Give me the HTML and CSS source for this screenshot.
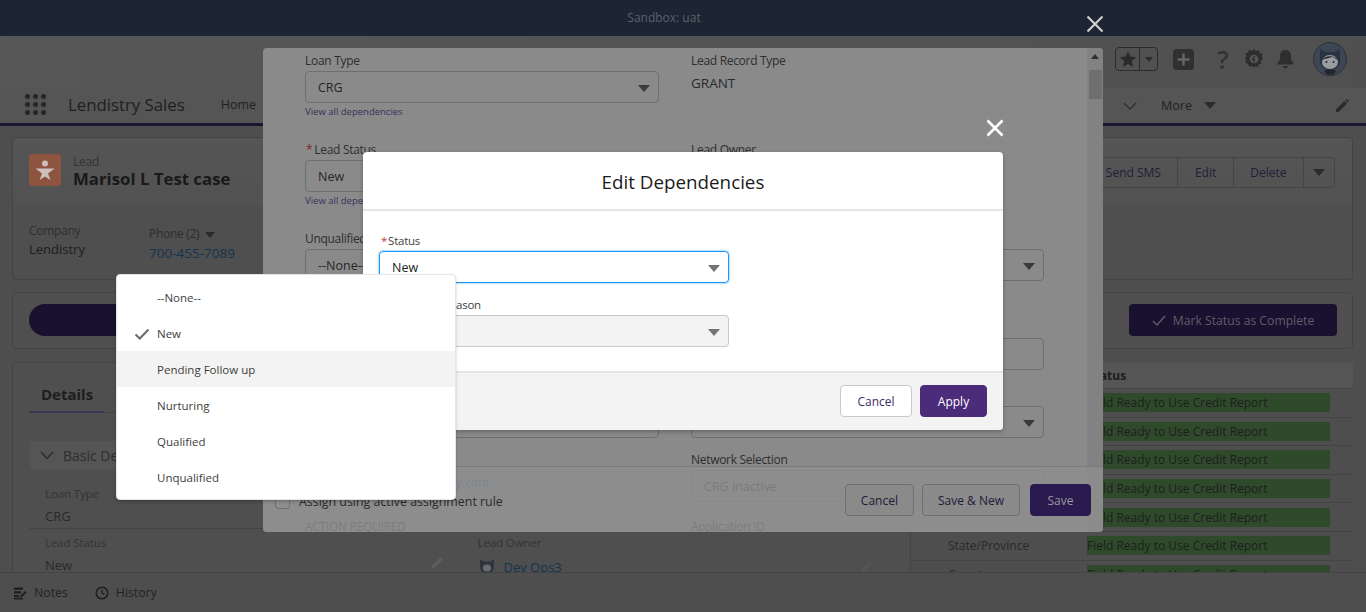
FILE: index.html
```html
<!DOCTYPE html>
<html lang="en">
<head>
    <meta charset="UTF-8">
    <meta name="viewport" content="width=device-width, initial-scale=1.0">
    <title>Lendistry Sales - Edit Dependencies</title>
    <link rel="stylesheet" href="styles.css">
</head>
<body>
    <div class="sandbox-bar">Sandbox: uat</div>

    <header class="global-header">
        <div class="header-tools">
            <div class="fav-group">
                <span class="fav-star">
                    <svg width="18" height="18" viewBox="0 0 24 24"><path d="M12 1.500l3.200 7.200 7.800.8-5.900 5.200 1.800 7.800-6.900-4-6.900 4 1.800-7.800L1 9.500l7.800-.8z" fill="#2b2b2b"/></svg>
                </span>
                <span class="fav-caret"><i class="caret caret-small"></i></span>
            </div>
            <svg class="tool-plus" width="21" height="21" viewBox="0 0 21 21"><rect width="21" height="21" rx="4" fill="#303030"/><path d="M10.500 4.500v12M4.500 10.500h12" stroke="#666" stroke-width="2.400"/></svg>
            <span class="tool-help">?</span>
            <svg class="tool-gear" width="18" height="20" viewBox="0 0 18 20"><path d="M9 0.500l2 2.200 2.900-.7.900 2.900 2.800 1-.7 2.900L18 11l-2.100 2.100.7 2.800-2.800.9-.9 2.800-2.900-.6L9 20.200 7 18.500l-2.900.6-.9-2.800-2.800-.9.700-2.800L0 11l1.100-2.700-.7-2.900 2.800-1 .9-2.900L7 2.700z" fill="#2e2e2e" transform="translate(0 -.6) scale(1 .95)"/><circle cx="9" cy="10" r="4.300" fill="#555"/><path d="M10 7l-2.500 3.500h2L8.500 13" stroke="#2e2e2e" stroke-width="1.200" fill="none"/></svg>
            <svg class="tool-bell" width="19" height="20" viewBox="0 0 19 20"><path d="M9.500 1c3.500 0 5.500 2.500 5.500 6v3.500l2.500 3.500v1.500h-16V14L4 10.500V7c0-3.500 2-6 5.500-6z" fill="#2e2e2e"/><path d="M7 17h5c0 1.500-1 2.500-2.500 2.500S7 18.500 7 17z" fill="#2e2e2e"/></svg>
            <svg class="tool-avatar" width="34" height="34" viewBox="0 0 34 34">
                <circle cx="17" cy="17" r="16.500" fill="#3d4654" stroke="#2d3138"/>
                <path d="M7 15l0-8 5 3h10l5-3v8c1 8-3 13-10 13S6 23 7 15z" fill="#2a3340"/>
                <ellipse cx="17" cy="20" rx="8" ry="7" fill="#9a9ea2"/>
                <path d="M9 18c3-5 13-5 16 0-4-2-4-3-6-3-2 1-6 1-10 3z" fill="#20252c"/>
                <circle cx="13.500" cy="20" r="1" fill="#20252c"/>
                <circle cx="20.500" cy="20" r="1" fill="#20252c"/>
                <path d="M11 29c3-2 9-2 12 0l-3 3.500h-6z" fill="#20252c"/>
            </svg>
        </div>
    </header>

    <nav class="app-nav">
        <span class="waffle"><i></i><i></i><i></i><i></i><i></i><i></i><i></i><i></i><i></i></span>
        <span class="app-name">Lendistry Sales</span>
        <a class="nav-home" href="#">Home</a>
        <span class="nav-right">
            <svg class="nav-chevron" width="14" height="8" viewBox="0 0 14 8"><path d="M1 1l6 6 6-6" stroke="#2b2b2b" stroke-width="1.200" fill="none"/></svg>
            <span class="nav-more">More</span>
            <i class="caret caret-nav"></i>
            <svg class="nav-pencil" width="14" height="14" viewBox="0 0 14 14"><path d="M1 10.500L9.500 2l2.500 2.500L3.500 13H1zM10.500 1l.8-.6c.4-.3.8-.3 1.100 0l1.200 1.200c.3.300.3.700 0 1l-.6.8z" fill="#2a2a2a"/></svg>
        </span>
    </nav>

    <main class="page">
        <section class="card highlights">
            <div class="hl-top">
                <span class="lead-icon">
                    <svg width="32" height="32" viewBox="0 0 32 32"><circle cx="16" cy="9.500" r="3" fill="#ccc0ba"/><path d="M6.500 14.500h19l-6.500 5 2.500 6.500-5.500-3.500-5.500 3.500 2.500-6.500z" fill="#ccc0ba"/></svg>
                </span>
                <div class="hl-titles">
                    <div class="hl-type">Lead</div>
                    <div class="hl-name">Marisol L Test case</div>
                </div>
                <div class="hl-actions">
                    <a class="act" href="#">Send SMS</a>
                    <a class="act" href="#">Edit</a>
                    <a class="act" href="#">Delete</a>
                    <a class="act act-more" href="#"><i class="caret"></i></a>
                </div>
            </div>
            <div class="hl-fields">
                <div class="hl-field hl-company">
                    <div class="hl-label">Company</div>
                    <div class="hl-value">Lendistry</div>
                </div>
                <div class="hl-field hl-phone">
                    <div class="hl-label">Phone (2) <i class="caret caret-phone"></i></div>
                    <a class="hl-link" href="#">700-455-7089</a>
                </div>
            </div>
        </section>

        <section class="card path">
            <span class="path-pill"></span>
            <button class="mark-btn">
                <svg width="14" height="11" viewBox="0 0 14 11"><path d="M1 6l4 4 8-9" stroke="#5e5e6a" stroke-width="1.400" fill="none"/></svg>
                Mark Status as Complete
            </button>
        </section>

        <div class="lower">
            <section class="card details">
                <div class="tabs"><span class="tab">Details</span></div>
                <div class="section-head">
                    <svg width="14" height="9" viewBox="0 0 14 9"><path d="M1 1l6 6.500L13 1" stroke="#2e2e2e" stroke-width="1.500" fill="none"/></svg>
                    Basic Details
                </div>
                <div class="detail-row detail-row-first">
                    <div class="detail-item detail-wide">
                        <div class="detail-label">Loan Type</div>
                        <div class="detail-value">CRG</div>
                    </div>
                </div>
                <div class="detail-row">
                    <div class="detail-item">
                        <div class="detail-label">Lead Status</div>
                        <div class="detail-value">New</div>
                        <svg class="detail-pencil" width="14" height="14" viewBox="0 0 14 14"><path d="M1 10.500L9.500 2l2.500 2.500L3.500 13H1z" fill="#5c5c5c"/></svg>
                    </div>
                    <div class="detail-item">
                        <div class="detail-label">Lead Owner</div>
                        <div class="detail-value detail-owner">
                            <svg width="18" height="18" viewBox="0 0 18 18"><path d="M2 8V1l3.500 2.500h7L16 1v7c0 5-3 8-7 8s-7-3-7-8z" fill="#30353c"/><ellipse cx="9" cy="10" rx="4" ry="3.500" fill="#6a6e72"/></svg>
                            <a href="#">Dev Ops3</a>
                        </div>
                        <svg class="detail-pencil detail-pencil-owner" width="14" height="14" viewBox="0 0 14 14"><path d="M1 10.500L9.500 2l2.500 2.500L3.500 13H1z" fill="#555"/></svg>
                    </div>
                </div>
            </section>

            <section class="status-table">
                <div class="status-head"><span></span><span class="status-title">Status</span></div>
                <div class="status-row"><span></span><span class="status-cell">Field Ready to Use Credit Report</span></div>
                <div class="status-row"><span></span><span class="status-cell">Field Ready to Use Credit Report</span></div>
                <div class="status-row"><span></span><span class="status-cell">Field Ready to Use Credit Report</span></div>
                <div class="status-row"><span></span><span class="status-cell">Field Ready to Use Credit Report</span></div>
                <div class="status-row"><span></span><span class="status-cell">Field Ready to Use Credit Report</span></div>
                <div class="status-row"><span>State/Province</span><span class="status-cell">Field Ready to Use Credit Report</span></div>
                <div class="status-row"><span>Country</span><span class="status-cell">Field Ready to Use Credit Report</span></div>
            </section>
        </div>
    </main>

    <footer class="util-bar">
        <span class="util-item">
            <svg width="14" height="14" viewBox="0 0 14 14"><path d="M1 1.500h9v2.300H1zM1 5.300h7v2.300H1zM1 9h5v2.300H1zM1 12h9v1.500H1z" fill="#1e1e1e"/><path d="M7 10l5-5 1.500 1.500-5 5H7z" fill="#1e1e1e"/></svg>
            Notes
        </span>
        <span class="util-item">
            <svg width="14" height="14" viewBox="0 0 14 14"><circle cx="7" cy="7" r="5.800" stroke="#1e1e1e" stroke-width="1.500" fill="none"/><path d="M7 3.500V7l2.500 1.500" stroke="#1e1e1e" stroke-width="1.300" fill="none"/></svg>
            History
        </span>
    </footer>

    <!-- record edit modal, sits behind the dependency dialog -->
    <div class="edit-modal">
        <div class="edit-scroll">
            <div class="edit-grid">
                <div class="field f-loan">
                    <label>Loan Type</label>
                    <div class="select">CRG<i class="caret"></i></div>
                    <a class="dep-link" href="#">View all dependencies</a>
                </div>
                <div class="field f-loan">
                    <label>Lead Record Type</label>
                    <div class="static">GRANT</div>
                </div>
                <div class="field f-status">
                    <label><b>*</b>Lead Status</label>
                    <div class="select">New<i class="caret"></i></div>
                    <a class="dep-link" href="#">View all dependencies</a>
                </div>
                <div class="field f-status">
                    <label>Lead Owner</label>
                </div>
                <div class="field f-unq">
                    <label>Unqualified Reason</label>
                    <div class="select">--None--<i class="caret"></i></div>
                </div>
                <div class="field f-unq">
                    <label>&nbsp;</label>
                    <div class="select"><i class="caret"></i></div>
                </div>
                <div class="field f-input">
                    <label>&nbsp;</label>
                    <div class="select"></div>
                </div>
                <div class="field f-input">
                    <label>&nbsp;</label>
                    <div class="select"></div>
                </div>
                <div class="field f-last">
                    <label>&nbsp;</label>
                    <div class="select"><i class="caret"></i></div>
                </div>
                <div class="field f-last">
                    <label>&nbsp;</label>
                    <div class="select"><i class="caret"></i></div>
                </div>
                <div class="field f-net">
                    <div class="faded-mail">info@lendistry.com</div>
                </div>
                <div class="field f-net">
                    <label>Network Selection</label>
                    <div class="select">CRG Inactive</div>
                </div>
                <div class="field f-action">
                    <label>ACTION REQUIRED</label>
                </div>
                <div class="field f-action">
                    <label>Application ID</label>
                </div>
            </div>
            <div class="scrollbar">
                <i class="arrow-up"></i>
                <span class="thumb"></span>
                <i class="arrow-down"></i>
            </div>
        </div>
        <div class="edit-footer">
            <label class="assign"><span class="checkbox"></span>Assign using active assignment rule</label>
            <div class="edit-buttons">
                <button class="btn-m">Cancel</button>
                <button class="btn-m">Save &amp; New</button>
                <button class="btn-m btn-m-save">Save</button>
            </div>
        </div>
    </div>

    <svg class="close close-outer" width="18" height="18" viewBox="0 0 18 18"><path d="M1.500 1.500l15 15M16.500 1.500l-15 15" stroke="#cfcfcf" stroke-width="2.200"/></svg>
    <svg class="close close-inner" width="18" height="18" viewBox="0 0 18 18"><path d="M1.500 1.500l15 15M16.500 1.500l-15 15" stroke="#fff" stroke-width="2.600"/></svg>

    <div class="dep-dialog">
        <h2 class="dep-title">Edit Dependencies</h2>
        <div class="dep-body">
            <div class="dep-field">
                <label><b>*</b>Status</label>
                <div class="dep-select dep-focus">New<i class="caret"></i></div>
            </div>
            <div class="dep-field">
                <label>Unqualified Reason</label>
                <div class="dep-select dep-disabled"><i class="caret"></i></div>
            </div>
        </div>
        <div class="dep-footer">
            <button class="dep-btn">Cancel</button>
            <button class="dep-btn dep-apply">Apply</button>
        </div>
    </div>

    <ul class="dropdown">
        <li>--None--</li>
        <li class="selected">
            <svg width="16" height="12" viewBox="0 0 16 12"><path d="M1.500 6.500l4.300 4L14.500 1.500" stroke="#6b6b6b" stroke-width="2" fill="none"/></svg>
            New
        </li>
        <li class="hover">Pending Follow up</li>
        <li>Nurturing</li>
        <li>Qualified</li>
        <li>Unqualified</li>
    </ul>
</body>
</html>
```

FILE: styles.css
```css
* {
    box-sizing: border-box;
}
html, body {
    margin: 0;
    height: 612px;
    overflow: hidden;
}
body {
    position: relative;
    font-family: "Open Sans", "Liberation Sans", sans-serif;
    font-size: 12px;
    color: #2a2a2a;
    background-color: #4e4e4e;
}
a {
    text-decoration: none;
}
.caret {
    display: inline-block;
    width: 0;
    height: 0;
    border-left: 6px solid transparent;
    border-right: 6px solid transparent;
    border-top: 7px solid #2b2b2b;
}

/* top of the app */
.sandbox-bar {
    height: 36px;
    line-height: 36px;
    padding-right: 38px;
    text-align: center;
    font-size: 12px;
    color: #5c626b;
    background-color: #1b2533;
}
.global-header {
    height: 52px;
    display: flex;
    justify-content: flex-end;
    background: linear-gradient(90deg, #575757, #505050);
}
.header-tools {
    display: flex;
    align-items: center;
    height: 46px;
    padding-right: 19px;
}
.fav-group {
    display: flex;
    width: 43px;
    height: 24px;
    border: 1px solid #2b2b2b;
    border-radius: 4px;
    margin-right: 15px;
}
.fav-star {
    width: 24px;
    display: flex;
    align-items: center;
    justify-content: center;
    border-right: 1px solid #2b2b2b;
}
.fav-caret {
    flex: 1;
    display: flex;
    align-items: center;
    justify-content: center;
}
.caret-small {
    border-left-width: 4px;
    border-right-width: 4px;
    border-top-width: 5px;
}
.tool-help {
    width: 18px;
    margin: 0 13px 0 20px;
    font-size: 26px;
    font-weight: 600;
    line-height: 24px;
    text-align: center;
    color: #333;
}
.tool-bell {
    margin: 0 18px 0 13px;
}
.app-nav {
    position: relative;
    height: 38px;
    display: flex;
    align-items: center;
    padding: 0 0 2px 25px;
    background-color: #555;
    border-bottom: 3px solid #1d1530;
}
.waffle {
    display: grid;
    grid-template-columns: repeat(3, 5px);
    gap: 3px;
    margin-right: 22px;
}
.waffle i {
    width: 5px;
    height: 5px;
    border-radius: 50%;
    background-color: #262626;
}
.app-name {
    font-size: 16.800px;
    color: #1e1e1e;
    margin-right: 36px;
}
.nav-home {
    font-size: 12.500px;
    color: #1e1e1e;
}
.nav-right {
    position: absolute;
    right: 0;
    top: 0;
    height: 35px;
    display: flex;
    align-items: center;
}
.nav-chevron {
    margin-right: 24px;
}
.nav-more {
    font-size: 12.500px;
    color: #222;
    margin-right: 12px;
}
.caret-nav {
    margin-right: 119px;
}
.nav-pencil {
    margin-right: 17px;
}
.page {
    padding: 11px 13px 0 12px;
}
.card {
    border: 1px solid #444;
    border-radius: 4px;
    background-color: #4f4f4f;
}

/* record highlights */
.highlights {
    height: 143px;
    margin-bottom: 12px;
    background: linear-gradient(#555 0, #525252 65px, #4f4f4f 70px);
}
.hl-top {
    display: flex;
    align-items: flex-start;
    padding: 16px 17px 0 16px;
}
.lead-icon {
    width: 32px;
    height: 32px;
    border-radius: 3px;
    background-color: #8e5440;
    margin-right: 12px;
}
.hl-type {
    font-size: 12px;
    line-height: 15px;
    letter-spacing: -.2px;
    color: #333;
}
.hl-name {
    font-size: 16.800px;
    line-height: 20px;
    font-weight: 700;
    color: #191919;
}
.hl-actions {
    margin: 3px 0 0 auto;
    display: flex;
    height: 31px;
    border: 1px solid #444;
    border-radius: 4px;
}
.act {
    display: flex;
    align-items: center;
    padding: 0 16.500px;
    font-size: 12px;
    color: #241c38;
    border-left: 1px solid #444;
}
.act:first-child {
    border-left: 0;
}
.act-more {
    padding: 0 9px;
}
.hl-fields {
    display: flex;
    padding: 33px 16px 0;
}
.hl-company {
    width: 120px;
}
.hl-phone {
    padding-top: 3px;
}
.hl-label {
    font-size: 12px;
    line-height: 18px;
    letter-spacing: -.3px;
    color: #2e2e2e;
}
.hl-value {
    font-size: 13px;
    line-height: 20px;
    margin-top: -1px;
    color: #1e1e1e;
}
.hl-link {
    font-size: 13.500px;
    line-height: 20px;
    color: #12344f;
}
.caret-phone {
    margin-left: 3px;
    border-left-width: 5px;
    border-right-width: 5px;
    border-top-width: 6px;
}

/* path strip */
.path {
    height: 57px;
    padding: 11px 15px 11px 16px;
    display: flex;
    justify-content: space-between;
    margin-bottom: 13px;
}
.path-pill {
    width: 300px;
    height: 32px;
    border-radius: 17px;
    background-color: #1a1130;
}
.mark-btn {
    width: 208px;
    height: 32px;
    border: 0;
    border-radius: 4px;
    background-color: #1a1130;
    color: #5e5e6a;
    font-family: inherit;
    font-size: 12.200px;
    display: flex;
    align-items: center;
    justify-content: center;
    gap: 7px;
}

/* details + status table */
.lower {
    display: flex;
}
.details {
    width: 899px;
    height: 260px;
    padding: 0 16px;
}
.tabs {
    height: 50px;
    border-bottom: 1px solid #444;
}
.tab {
    display: inline-block;
    width: 75px;
    height: 50px;
    padding: 21px 0 0 12px;
    font-size: 15px;
    line-height: 20px;
    font-weight: 700;
    color: #1e1e1e;
    border-bottom: 2px solid #3f3557;
}
.section-head {
    margin-top: 28px;
    margin-left: 1px;
    height: 29px;
    display: flex;
    align-items: center;
    gap: 9px;
    padding-left: 10px;
    font-size: 14px;
    color: #2e2e2e;
    background-color: #555;
    border-radius: 3px;
}
.detail-row {
    display: flex;
}
.detail-row-first {
    margin-top: 10px;
}
.detail-item {
    position: relative;
    width: 433px;
    padding: 6px 16px 2px;
    border-bottom: 1px solid #444;
}
.detail-wide {
    width: 866px;
}
.detail-label {
    font-size: 11.500px;
    line-height: 16px;
    letter-spacing: -.1px;
    color: #333;
}
.detail-value {
    font-size: 13px;
    line-height: 20px;
    margin-top: 4px;
    color: #2a2a2a;
}
.detail-pencil {
    position: absolute;
    right: 17px;
    top: 26px;
}
.detail-pencil-owner {
    right: 20px;
    top: 30px;
}
.detail-owner {
    display: flex;
    align-items: center;
    gap: 8px;
    margin-top: 6px;
}
.detail-owner a {
    color: #12344f;
}
.status-table {
    flex: 1;
    padding-top: 1px;
}
.status-head, .status-row {
    display: grid;
    grid-template-columns: 177px 1fr;
    align-items: center;
}
.status-head {
    height: 26px;
    background-color: #555;
    border-bottom: 1px solid #444;
}
.status-title {
    font-size: 12px;
    font-weight: 700;
    color: #1e1e1e;
}
.status-row {
    height: 28.600px;
    padding-left: 37px;
    grid-template-columns: 139px 243px;
    border-bottom: 1px solid #444;
    color: #2a2a2a;
}
.status-cell {
    height: 19px;
    line-height: 19px;
    background-color: #2f4a2b;
    color: #1e1e1e;
}

/* bottom utility bar */
.util-bar {
    position: absolute;
    left: 0;
    right: 0;
    bottom: 0;
    height: 40px;
    display: flex;
    align-items: center;
    gap: 27px;
    padding-left: 13px;
    background-color: #4e4e4e;
    border-top: 1px solid #444;
    font-size: 12.300px;
    color: #222;
}
.util-item {
    display: flex;
    align-items: center;
    gap: 7px;
}

/* edit modal */
.edit-modal {
    position: absolute;
    left: 263px;
    top: 48px;
    width: 840px;
    height: 484px;
    overflow: hidden;
    border-radius: 4px;
    background-color: #8a8a8a;
}
.edit-scroll {
    height: 100%;
    overflow: hidden;
    position: relative;
}
.edit-grid {
    display: grid;
    grid-template-columns: 354px 353px;
    column-gap: 32px;
    padding: 5px 0 0 42px;
}
.field label {
    display: block;
    height: 18px;
    line-height: 16px;
    letter-spacing: -.3px;
    color: #2e2e2e;
}
.field label b {
    color: #7a2a2a;
    font-weight: 400;
    margin: 0 2px 0 1px;
}
.f-loan {
    height: 89px;
}
.f-status {
    height: 89px;
}
.f-unq {
    height: 89px;
}
.f-input {
    height: 68px;
}
.f-last {
    height: 64px;
}
.f-net {
    height: 67px;
}
.select {
    position: relative;
    height: 32px;
    line-height: 32px;
    padding-left: 12px;
    font-size: 12.500px;
    color: #262626;
    border: 1px solid #6f6f6f;
    border-radius: 4px;
}
.select .caret {
    position: absolute;
    right: 8px;
    top: 13px;
    border-top-color: #3a3a3a;
}
.faded-mail {
    padding: 22px 0 0 76px;
    color: #2a5a9a;
}
.static {
    margin-top: 2px;
    font-size: 13.500px;
    line-height: 20px;
    color: #2a2a2a;
}
.dep-link {
    display: block;
    margin-top: 2px;
    font-size: 9.500px;
    line-height: 13px;
    color: #38305c;
}
.scrollbar {
    position: absolute;
    top: 0;
    right: 0;
    bottom: 0;
    width: 16px;
    background-color: #828282;
    display: flex;
    flex-direction: column;
    align-items: center;
    padding-top: 6px;
}
.thumb {
    width: 13px;
    height: 29px;
    margin-top: 11px;
    background-color: #6f6f6f;
}
.arrow-up {
    width: 0;
    height: 0;
    border-left: 4px solid transparent;
    border-right: 4px solid transparent;
    border-bottom: 5px solid #2e2e2e;
}
.arrow-down {
    position: absolute;
    bottom: 6px;
    width: 0;
    height: 0;
    border-left: 4px solid transparent;
    border-right: 4px solid transparent;
    border-top: 5px solid #7b7b7b;
}
.edit-footer {
    position: absolute;
    left: 0;
    right: 0;
    bottom: 0;
    height: 66px;
    display: flex;
    align-items: center;
    justify-content: space-between;
    padding: 0 12px;
    background-color: rgba(142, 142, 142, .82);
    border-top: 1px solid #7b7b7b;
}
.assign {
    display: flex;
    align-items: center;
    gap: 9px;
    padding-top: 3px;
    font-size: 12.400px;
    color: #2a2a2a;
}
.checkbox {
    width: 15px;
    height: 15px;
    border: 1px solid #6f6f6f;
    border-radius: 3px;
    background-color: #8f8f8f;
}
.edit-buttons {
    display: flex;
    gap: 5px;
    margin-top: 1px;
}
.btn-m {
    height: 32px;
    padding: 0 15px;
    border: 1px solid #6f6f6f;
    border-radius: 4px;
    background-color: #8a8a8a;
    color: #1f1a38;
    font-family: inherit;
    font-size: 12px;
    margin-left: 3px;
}
.btn-m-save {
    width: 61px;
    padding: 0;
    margin-left: 5px;
    border-color: #2a1a50;
    background-color: #2a1a50;
    color: #9a9a9a;
}

.close {
    position: absolute;
}
.close-outer {
    left: 1086px;
    top: 15px;
}
.close-inner {
    left: 986px;
    top: 119px;
}

/* dependency dialog */
.dep-dialog {
    position: absolute;
    left: 363px;
    top: 152px;
    width: 640px;
    height: 278px;
    overflow: hidden;
    border-radius: 4px;
    background-color: #fff;
    box-shadow: 0 2px 4px rgba(0, 0, 0, .25);
}
.dep-title {
    margin: 0;
    height: 59px;
    padding-top: 15px;
    line-height: 30px;
    text-align: center;
    font-size: 18.800px;
    font-weight: 400;
    color: #1b1b1b;
    border-bottom: 2px solid #e5e5e5;
}
.dep-body {
    height: 160px;
    padding: 22px 274px 0 16px;
}
.dep-field {
    margin-bottom: 14px;
}
.dep-field label {
    display: block;
    height: 18px;
    line-height: 16px;
    padding-left: 2px;
    letter-spacing: -.25px;
    color: #3e3e3c;
    font-size: 11.500px;
}
.dep-field label b {
    color: #c23934;
    font-weight: 400;
    margin-right: 1px;
}
.dep-select {
    position: relative;
    height: 32px;
    line-height: 32px;
    padding-left: 12px;
    font-size: 12.500px;
    color: #222;
    border: 1px solid #c9c9c9;
    border-radius: 4px;
}
.dep-select .caret {
    position: absolute;
    right: 8px;
    top: 13px;
    border-top-color: #747474;
}
.dep-focus {
    border-color: #1b96ff;
    box-shadow: 0 0 2px #1b96ff;
}
.dep-disabled {
    background-color: #f3f3f3;
}
.dep-footer {
    height: 59px;
    display: flex;
    justify-content: flex-end;
    align-items: flex-start;
    gap: 8px;
    padding: 12px 16px 0 0;
    background-color: #f3f3f3;
    border-top: 2px solid #e5e5e5;
}
.dep-btn {
    width: 72px;
    height: 32px;
    border: 1px solid #c9c9c9;
    border-radius: 4px;
    background-color: #fff;
    color: #3b2a63;
    font-family: inherit;
    font-size: 12px;
}
.dep-apply {
    width: 67px;
    border-color: #4a2c7a;
    background-color: #4a2c7a;
    color: #fff;
}

/* open picklist */
.dropdown {
    position: absolute;
    left: 116px;
    top: 274px;
    width: 340px;
    height: 226px;
    margin: 0;
    padding: 4px 0 0;
    list-style: none;
    background-color: #fff;
    border: 1px solid #e5e5e5;
    border-radius: 4px;
    box-shadow: 0 2px 3px rgba(0, 0, 0, .2);
}
.dropdown li {
    position: relative;
    height: 36px;
    line-height: 38px;
    padding-left: 40px;
    font-size: 11.500px;
    color: #3e3e3c;
}
.dropdown li svg {
    position: absolute;
    left: 17px;
    top: 13px;
}
.dropdown .hover {
    background-color: #f3f3f3;
}
```
